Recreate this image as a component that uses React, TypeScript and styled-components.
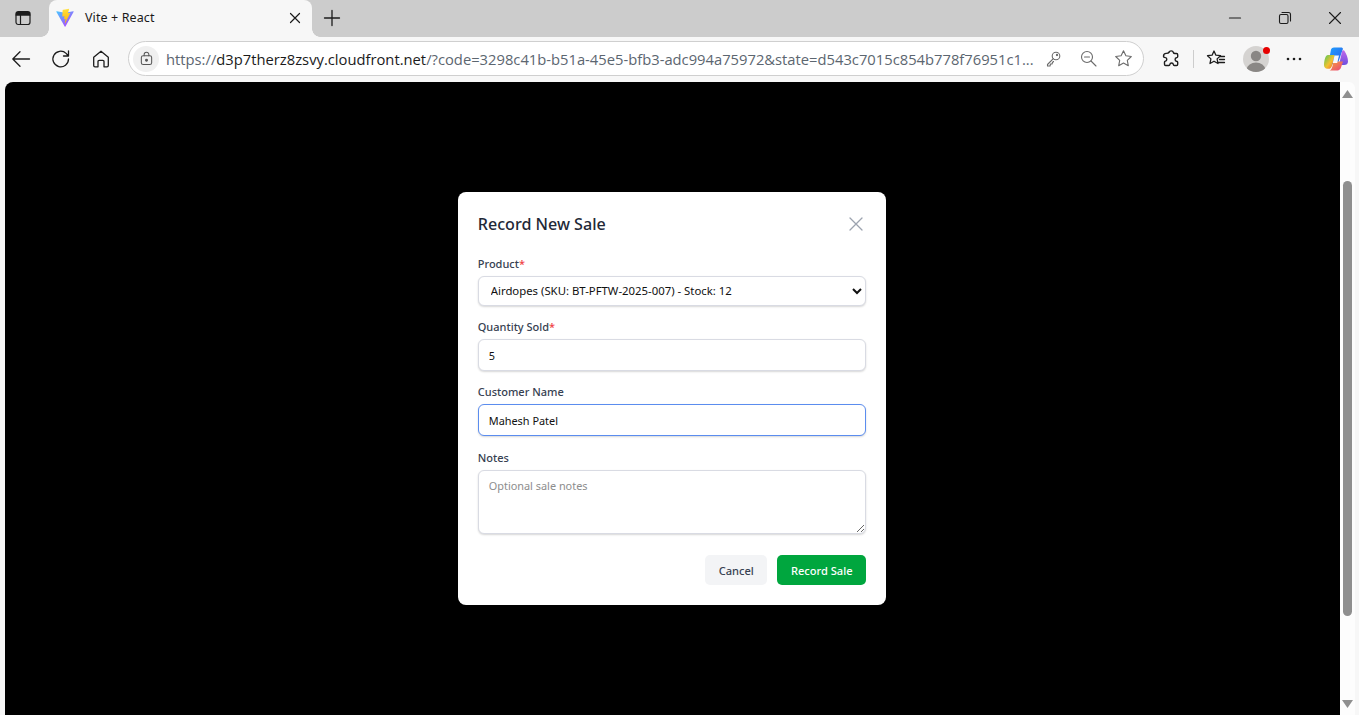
import React from "react";
import styled, { createGlobalStyle } from "styled-components";

const Global = createGlobalStyle`
  html, body { margin: 0; padding: 0; height: 715px; overflow: hidden; background: #f7f7f7; }
  * { box-sizing: border-box; }
  #root { height: 715px; }
`;

const Shell = styled.div`
  width: 1359px; height: 715px; display: flex; flex-direction: column;
  background: #f7f7f7; font-family: "Noto Sans", "Open Sans", sans-serif; overflow: hidden;
`;
const TabStrip = styled.div`
  height: 37px; flex: none; background: #cccccc; display: flex; align-items: stretch;
`;
const StripIcon = styled.div<{ $w: number }>`
  width: ${(p) => p.$w}px; flex: none; display: flex; align-items: center; justify-content: center; color: #1c1c1c; padding-bottom: 1px;
`;
const Tab = styled.div`
  position: relative; width: 263px; flex: none; background: #f7f7f7; border-radius: 8px 8px 0 0;
  display: flex; align-items: center; padding: 0 1px 2px 6px; color: #1a1a1a; font-size: 12.5px;
  &::before, &::after {
    content: ""; position: absolute; bottom: 0; width: 8px; height: 8px;
  }
  &::before { left: -8px; background: radial-gradient(circle at 0 0, #ccc 7.5px, #f7f7f7 8px); }
  &::after { right: -8px; background: radial-gradient(circle at 100% 0, #ccc 7.5px, #f7f7f7 8px); }
`;
const TabTitle = styled.span` flex: 1; margin-left: 10px; letter-spacing: 0.1px; `;
const Spacer = styled.div` flex: 1; `;
const Toolbar = styled.div`
  height: 45px; flex: none; display: flex; align-items: center; padding: 0 0 2px 1px; background: #f7f7f7;
`;
const ToolBtn = styled.div<{ $w?: number; $ml?: number }>`
  position: relative; width: ${(p) => p.$w ?? 40}px; height: 34px; flex: none; margin-left: ${(p) => p.$ml ?? 0}px;
  display: flex; align-items: center; justify-content: center; color: #1c1c1c;
`;
const Address = styled.div`
  width: 1016px; height: 35px; margin-left: 7px; flex: none; background: #fff; border: 1px solid #cfcfcf; border-radius: 18px;
  display: flex; align-items: center; padding: 0 2px 0 4px;
`;
const LockWrap = styled.div`
  width: 26px; height: 26px; border-radius: 50%; background: #f0f0f0; flex: none;
  display: flex; align-items: center; justify-content: center; color: #555;
`;
const Url = styled.div`
  flex: 1; margin-left: 7px; padding-top: 1px; font-family: "Open Sans", "Noto Sans", sans-serif; font-size: 14.76px; color: #5c6670; white-space: nowrap; overflow: hidden;
`;
const Host = styled.span` color: #1b1b1b; `;
const AddrIcon = styled.div<{ $w: number }>`
  width: ${(p) => p.$w}px; flex: none; display: flex; justify-content: center; color: #6b6b6b;
`;
const Divider = styled.div` width: 1px; height: 18px; background: #cdcdcd; flex: none; `;
const Avatar = styled.div`
  width: 26px; height: 26px; border-radius: 50%; background: #d5d3d1; overflow: hidden; display: flex;
`;
const Badge = styled.span`
  position: absolute; top: 5px; left: 25.5px; width: 7px; height: 7px; border-radius: 50%; background: #e60000;
`;
const PageRow = styled.div`
  flex: 1; display: flex; padding-left: 5px; padding-right: 4px; min-height: 0;
`;
const Viewport = styled.div`
  flex: 1; background: #000; border-radius: 8px 0 0 0; display: flex; align-items: center; justify-content: center; padding-right: 1px;
`;
const Modal = styled.div`
  width: 428.5px; height: 413px; background: #fff; border-radius: 8px; padding: 20px; display: flex; flex-direction: column;
  font-family: "Noto Sans", "Open Sans", sans-serif;
`;
const Header = styled.div`
  display: flex; align-items: center; justify-content: space-between; height: 24px; margin-bottom: 20px;
`;
const Title = styled.h2`
  margin: 0; font-size: 16.1px; font-weight: 500; color: #1f2937; line-height: 24px;
`;
const CloseBtn = styled.div` color: #9ca3af; display: flex; margin-right: 2px; `;
const Field = styled.div<{ $gap?: number }>`
  display: flex; flex-direction: column; margin-bottom: ${(p) => p.$gap ?? 13}px;
`;
const Label = styled.label`
  font-size: 11px; font-weight: 500; line-height: 16px; color: #374151; margin-bottom: 4px; height: 16px;
`;
const Req = styled.span` color: #ef4444; `;
const controlCss = `
  width: 100%; background: #fff; border-radius: 6px; font-family: "Noto Sans", "Open Sans", sans-serif;
  font-size: 10.9px; color: #111; padding: 0 10px; outline: none;
  box-shadow: 0 1px 2px rgba(0,0,0,.16);
`;
const Select = styled.select`
  ${controlCss} font-size: 11.35px; padding: 0 8px 1px; height: 30px; border: 1px solid #d9dbe3;
`;
const Input = styled.input<{ $focus?: boolean }>`
  ${controlCss} height: 32px; border: 1px solid ${(p) => (p.$focus ? "#5b8def" : "#d9dbe3")};
`;
const Textarea = styled.textarea`
  ${controlCss} display: block; height: 64px; padding: 7px 10px; border: 1px solid #d9dbe3; resize: vertical;
  &::placeholder { color: #8d8d8d; }
`;
const Actions = styled.div` display: flex; justify-content: flex-end; gap: 10px; margin-top: 8px; `;
const Button = styled.button<{ $primary?: boolean }>`
  height: 30px; border: none; border-radius: 5px; padding: 0; font-family: inherit; font-size: 11.1px; font-weight: 500;
  width: ${(p) => (p.$primary ? 89 : 62)}px;
  background: ${(p) => (p.$primary ? "#00a63e" : "#f3f4f6")};
  color: ${(p) => (p.$primary ? "#fff" : "#374151")};
`;
const Scrollbar = styled.div`
  width: 15px; flex: none; background: #fdfdfd; border-radius: 0 6px 0 0; display: flex; flex-direction: column; align-items: center; padding: 8px 0 7px;
`;
const Track = styled.div` flex: 1; width: 100%; display: flex; justify-content: center; padding: 83px 0 84px; `;
const Thumb = styled.div` width: 9px; height: 100%; border-radius: 5px; background: #8f8f8f; `;

const I = ({ s = 16, vb = "0 0 16 16", children, sw = 1.2 }: { s?: number; vb?: string; children: React.ReactNode; sw?: number }) => (
  <svg width={s} height={s} viewBox={vb} fill="none" stroke="currentColor" strokeWidth={sw} strokeLinecap="round" strokeLinejoin="round">{children}</svg>
);

const ViteLogo = () => (
  <svg width="20" height="20" viewBox="0 0 32 32">
    <defs>
      <linearGradient id="v1" x1="6" y1="33" x2="235" y2="344" gradientUnits="userSpaceOnUse" gradientTransform="scale(.1)">
        <stop stopColor="#41D1FF" /><stop offset="1" stopColor="#BD34FE" />
      </linearGradient>
      <linearGradient id="v2" x1="194" y1="8" x2="236" y2="292" gradientUnits="userSpaceOnUse" gradientTransform="scale(.1)">
        <stop stopColor="#FFEA83" /><stop offset=".08" stopColor="#FFDD35" /><stop offset="1" stopColor="#FFA800" />
      </linearGradient>
    </defs>
    <path fill="url(#v1)" d="M29.8836 6.146L16.7418 29.6457c-.2714.4851-.9684.488-1.2439.0052L2.0956 6.1482c-.3-.5262.1498-1.1635.746-1.057l13.156 2.3516a.7144.7144 0 00.2537-.0004l12.8808-2.3478c.5942-.1083 1.0463.5241.7515 1.0513z" />
    <path fill="url(#v2)" d="M22.2644 1.0079l-9.7253 1.9056a.3571.3571 0 00-.2879.3294l-.5982 10.1037c-.0141.238.2045.4227.4367.3691l2.7077-.6248c.2534-.0585.4823.1647.4302.4195l-.8044 3.9393c-.0542.265.1947.4917.4536.4131l1.6723-.5081c.2593-.0787.5084.1484.4536.4136l-1.2784 6.1877c-.08.3871.4348.5981.6495.2663l.1434-.2217 7.9236-15.8133c.1327-.2648-.096-.5667-.387-.5106l-2.7868.5378c-.2618.0505-.4849-.1934-.4109-.4494l1.8188-6.3052c.074-.2565-.1497-.5006-.4115-.4494z" />
  </svg>
);

const Copilot = () => (
  <svg width="26" height="26" viewBox="0 0 26 26">
    <defs>
      <linearGradient id="c1" x1="0" y1="0" x2="1" y2="1"><stop stopColor="#1fa2ff" /><stop offset="1" stopColor="#2b5be8" /></linearGradient>
      <linearGradient id="c2" x1="0" y1="0" x2="0" y2="1"><stop stopColor="#c268e8" /><stop offset="1" stopColor="#6d4fe0" /></linearGradient>
      <linearGradient id="c3" x1="0" y1="0" x2="1" y2="1"><stop stopColor="#4fc85a" /><stop offset=".55" stopColor="#f2c230" /><stop offset="1" stopColor="#f0603a" /></linearGradient>
      <linearGradient id="c4" x1="0" y1="0" x2="1" y2="1"><stop stopColor="#f7a03c" /><stop offset="1" stopColor="#e8447a" /></linearGradient>
    </defs>
    <path fill="url(#c1)" d="M8 3.500c.5-1.300 1.500-2 3-2h7c1 0 1.600.4 2 1.200L15 17h-4l-3 2.500H5L8 3.500z" />
    <path fill="url(#c3)" d="M5 9h6.500l-1.800 8.500c-.5 2.400-1.500 4.500-3 5.300H4.500C2.200 22.800.8 20.800 1 18.500 1.300 14 2.500 9 5 9z" />
    <path fill="url(#c2)" d="M19 5.500c1-1.700 2-1.500 2.500-.5C23.500 8 25 12 25 15.500 25 18 23.500 19 21 19h-5l3-13.500z" />
    <path fill="url(#c4)" d="M10.500 15.500h9.500l-2 6c-.6 1.700-1.800 2.900-3.500 2.900H6.500c2-.4 3-3 4-8.900z" />
    <path fill="#fff" d="M11.500 9.500h4.500l-1.800 7.500H9.800z" opacity=".95" />
  </svg>
);

export default function App() {
  return (
    <Shell>
      <Global />
      <TabStrip>
        <StripIcon $w={45}>
          <I s={16}><rect x="1" y="1.500" width="14" height="13" rx="2.200" /><path d="M1 5h14M5.500 5v9.500" /><path d="M1.500 2.500h13v2.500h-13z" fill="currentColor" /></I>
        </StripIcon>
        <StripIcon $w={4} />
        <Tab>
          <ViteLogo />
          <TabTitle>Vite + React</TabTitle>
          <I s={16}><path d="M3.500 3.500l9 9M12.500 3.500l-9 9" /></I>
          <StripIcon $w={8} />
        </Tab>
        <StripIcon $w={40}>
          <I s={18} vb="0 0 18 18" sw={1.3}><path d="M9 1.500v15M1.500 9h15" /></I>
        </StripIcon>
        <Spacer />
        <StripIcon $w={50}><I s={14} vb="0 0 14 14"><path d="M1.500 7h11" /></I></StripIcon>
        <StripIcon $w={50}><I s={14} vb="0 0 14 14" sw={1.1}><rect x="1.500" y="3.500" width="8.500" height="9" rx="1.500" /><path d="M4 1.500h6.500a2 2 0 012 2V10" /></I></StripIcon>
        <StripIcon $w={49}><I s={14} vb="0 0 14 14" sw={1.1}><path d="M1.500 1.500l11 11M12.500 1.500l-11 11" /></I></StripIcon>
      </TabStrip>
      <Toolbar>
        <ToolBtn><I s={20} vb="0 0 20 20" sw={1.3}><path d="M18.500 10H1.800M9 2.800L1.800 10 9 17.200" /></I></ToolBtn>
        <ToolBtn><I s={20} vb="0 0 20 20" sw={1.3}><path d="M17.500 10a7.800 7.800 0 11-2.400-5.600L17.500 7V1.800M17.500 7h-5" /></I></ToolBtn>
        <ToolBtn><I s={20} vb="0 0 20 20" sw={1.3}><path d="M10 2.200L2.700 8.300v8.200a1.300 1.300 0 001.300 1.300h3V12.500a1.200 1.200 0 011.200-1.200h3.600a1.200 1.200 0 011.200 1.200v5.300h3a1.300 1.300 0 001.300-1.300V8.300z" /></I></ToolBtn>
        <Address>
          <LockWrap>
            <I s={15} vb="0 0 16 16" sw={1.100}><rect x="2.500" y="5" width="11" height="9.500" rx="2" /><path d="M5.500 5V3.800a2.500 2.500 0 015 0V5" /><circle cx="8" cy="9.800" r="1" fill="currentColor" /></I>
          </LockWrap>
          <Url>https://<Host>d3p7therz8zsvy.cloudfront.net</Host>/?code=3298c41b-b51a-45e5-bfb3-adc994a75972&amp;state=d543c7015c854b778f76951c1...</Url>
          <AddrIcon $w={35}><I s={17} vb="0 0 17 17" sw={1.100}><circle cx="11" cy="6" r="3.800" /><path d="M8.300 8.700L2.500 14.500v1.500h2.500l.5-2h1.500l.5-1.500 1-1" /><circle cx="12" cy="5" r=".6" fill="currentColor" /></I></AddrIcon>
          <AddrIcon $w={35}><I s={17} vb="0 0 17 17" sw={1.100}><circle cx="7" cy="7" r="5.500" /><path d="M11 11l5 5M4.500 7h5" /></I></AddrIcon>
          <AddrIcon $w={35}><I s={19} vb="0 0 19 19" sw={1.100}><path d="M9.500 1.800l2.400 5 5.400.7-4 3.800 1 5.400-4.800-2.600-4.800 2.600 1-5.400-4-3.800 5.400-.7z" /></I></AddrIcon>
        </Address>
        <ToolBtn $w={45} $ml={4}><I s={20} vb="0 0 20 20" sw={1.400}><path d="M8 3.500a2.300 2.300 0 014.400 0c.2.900.8 1 1.600 1h1.500c.8 0 1.200.5 1.200 1.200v2.100c0 .7-.7.9-1.300 1-1.700.2-1.700 3.200 0 3.400.6.100 1.300.3 1.300 1v2.100c0 .7-.6 1.200-1.200 1.200h-2.200c-.7 0-.9-.6-1-1.200-.2-1.700-3.200-1.700-3.400 0-.100.6-.3 1.200-1 1.200H4.700c-.7 0-1.200-.5-1.200-1.200v-2.200c0-.7.500-.9 1-1 1.700-.3 1.700-3.200 0-3.500-.5-.1-2-.3-2-1.200 0-1.800 1-3 2.700-3 1.200 0 2.400 0 2.800-1.400z" /></I></ToolBtn>
        <Divider />
        <ToolBtn $w={43}><I s={20} vb="0 0 20 20" sw={1.300}><path d="M8 2l1.900 4.200 4.600.5-3.400 3.200.9 4.600L8 12.200l-4 2.300.9-4.600L1.500 6.700l4.600-.5z" /><path d="M14 7.500h4.500M13.500 10.500h5M12.500 13.500h6" /></I></ToolBtn>
        <ToolBtn $w={37}>
          <Avatar>
            <svg width="26" height="26" viewBox="0 0 26 26"><circle cx="13" cy="10" r="5.200" fill="#8a8785" /><ellipse cx="13" cy="23" rx="9" ry="6.500" fill="#8a8785" /></svg>
          </Avatar>
          <Badge />
        </ToolBtn>
        <ToolBtn $w={39}><svg width="16" height="4" viewBox="0 0 16 4"><circle cx="2" cy="2" r="1.300" fill="#1c1c1c" /><circle cx="8" cy="2" r="1.300" fill="#1c1c1c" /><circle cx="14" cy="2" r="1.300" fill="#1c1c1c" /></svg></ToolBtn>
        <ToolBtn $w={45}><Copilot /></ToolBtn>
      </Toolbar>
      <PageRow>
        <Viewport>
          <Modal>
            <Header>
              <Title>Record New Sale</Title>
              <CloseBtn><I s={16} sw={1.300}><path d="M2 2l12 12M14 2L2 14" /></I></CloseBtn>
            </Header>
            <Field $gap={13}>
              <Label>Product<Req>*</Req></Label>
              <Select defaultValue="a"><option value="a">Airdopes (SKU: BT-PFTW-2025-007) - Stock: 12</option></Select>
            </Field>
            <Field $gap={13}>
              <Label>Quantity Sold<Req>*</Req></Label>
              <Input defaultValue="5" />
            </Field>
            <Field $gap={14}>
              <Label>Customer Name</Label>
              <Input $focus defaultValue="Mahesh Patel" />
            </Field>
            <Field $gap={13}>
              <Label>Notes</Label>
              <Textarea placeholder="Optional sale notes" />
            </Field>
            <Actions>
              <Button>Cancel</Button>
              <Button $primary>Record Sale</Button>
            </Actions>
          </Modal>
        </Viewport>
        <Scrollbar>
          <svg width="11" height="8" viewBox="0 0 11 8"><path d="M5.500 0L11 8H0z" fill="#8f8f8f" /></svg>
          <Track><Thumb /></Track>
          <svg width="11" height="8" viewBox="0 0 11 8"><path d="M0 0h11L5.500 8z" fill="#8f8f8f" /></svg>
        </Scrollbar>
      </PageRow>
    </Shell>
  );
}
